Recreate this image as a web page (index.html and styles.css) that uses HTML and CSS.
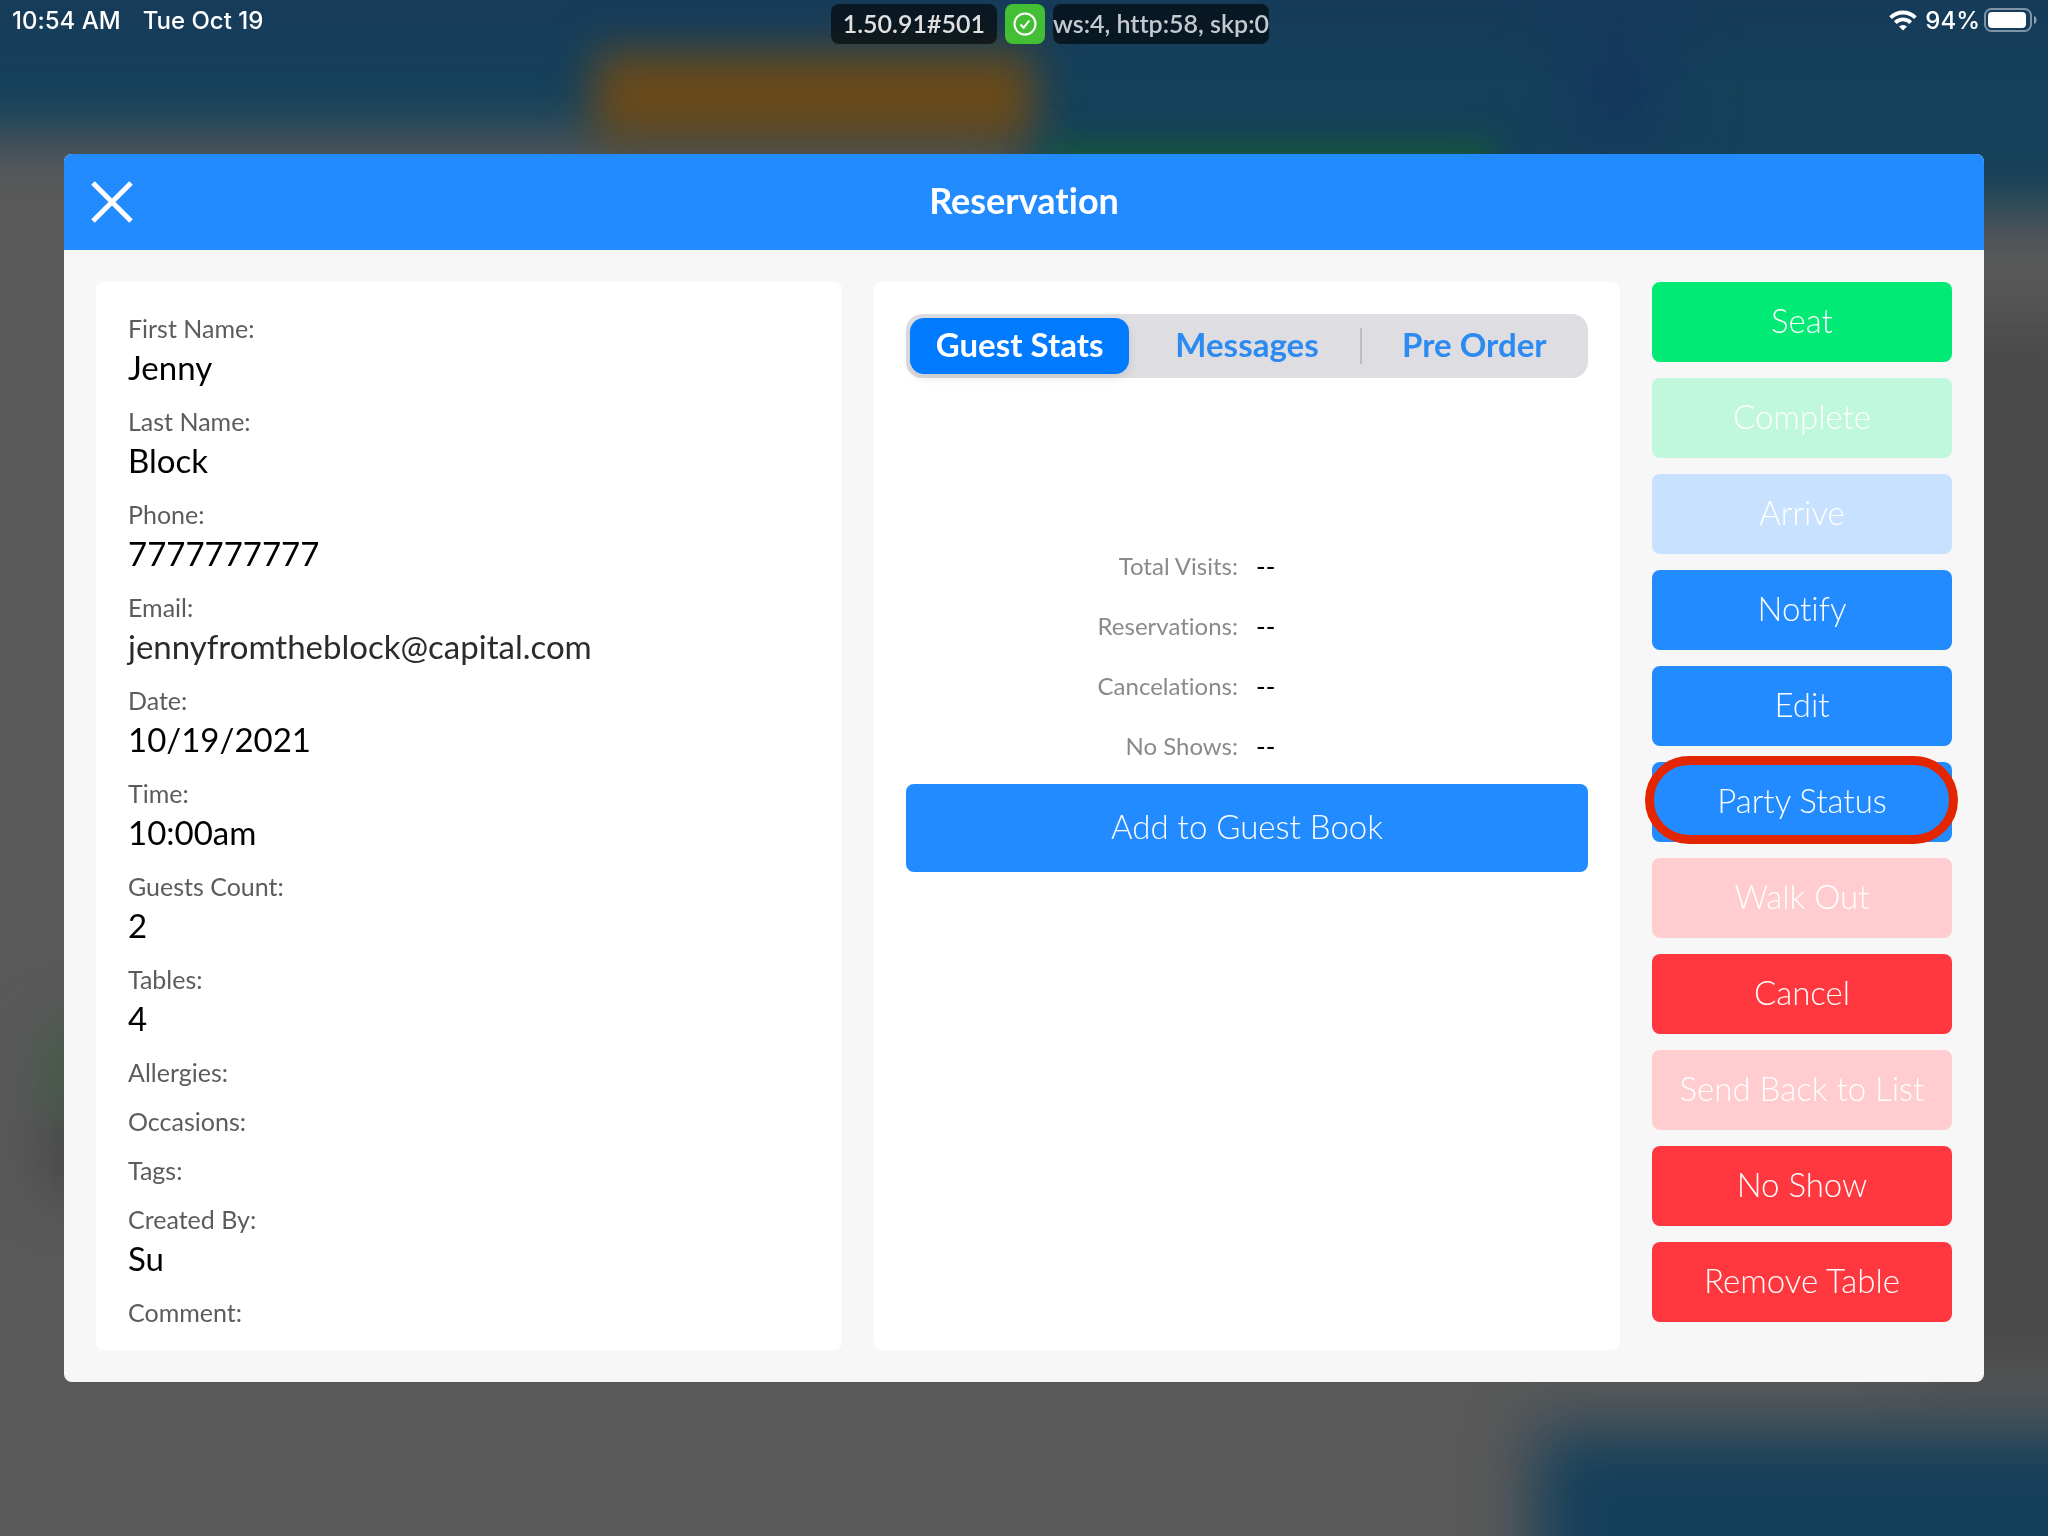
FILE: index.html
```
<!DOCTYPE html>
<html lang="en">
<head>
    <meta charset="UTF-8">
    <meta name="viewport" content="width=device-width, initial-scale=1.0">
    <title>Reservation</title>
    <link rel="stylesheet" href="styles.css">
</head>
<body>
    <div class="backdrop" aria-hidden="true">
        <div class="blob blob-side"></div>
        <div class="blob blob-bar"></div>
        <div class="blob blob-bar-right"></div>
        <div class="blob blob-navy"></div>
        <div class="blob blob-orange"></div>
        <div class="blob blob-green"></div>
        <div class="blob blob-left"></div>
        <div class="blob blob-left-green"></div>
        <div class="blob blob-bottom"></div>
    </div>

    <header class="status-bar">
        <div class="status-side">
            <div class="clock">
                <span>10:54 AM</span>
                <span>Tue Oct 19</span>
            </div>
            <span class="pill">1.50.91#501</span>
        </div>
        <span class="pill pill-ok">
            <svg width="24" height="24" viewBox="0 0 24 24" fill="none" stroke="#fff" stroke-width="2">
                <circle cx="12" cy="12" r="10.5"/>
                <path d="M7.5 12.5l3.2 3.2 5.6-7.2"/>
            </svg>
        </span>
        <div class="status-side">
            <span class="pill pill-log">ws:4, http:58, skp:0</span>
            <div class="battery">
                <svg width="28" height="21" viewBox="0 0 28 21" fill="none" stroke="#fff" stroke-width="3.8">
                    <path d="M1.6 7.6a17.6 17.6 0 0 1 24.8 0"/>
                    <path d="M6.3 12.6a11 11 0 0 1 15.4 0"/>
                    <path d="M14 20.6l-4-4.1a5.8 5.8 0 0 1 8 0z" fill="#fff" stroke="none"/>
                </svg>
                <span class="percent">94%</span>
                <svg width="54" height="24" viewBox="0 0 54 24">
                    <rect x="1" y="1" width="46" height="22" rx="6.5" fill="none" stroke="#fff" stroke-opacity=".45" stroke-width="2"/>
                    <rect x="4" y="4" width="38" height="16" rx="4" fill="#fff"/>
                    <path d="M50 8c3.500 1 3.500 7 0 8z" fill="#fff" fill-opacity=".5"/>
                </svg>
            </div>
        </div>
    </header>

    <main class="modal">
        <div class="modal-header">
            <button class="close" aria-label="Close">
                <svg width="42" height="42" viewBox="0 0 42 42" stroke="#fff" stroke-width="5">
                    <path d="M2 2l38 38M40 2L2 40"/>
                </svg>
            </button>
            <h1>Reservation</h1>
        </div>

        <div class="modal-body">
            <section class="panel details">
                <dl>
                    <div><dt>First Name:</dt><dd>Jenny</dd></div>
                    <div><dt>Last Name:</dt><dd>Block</dd></div>
                    <div><dt>Phone:</dt><dd>7777777777</dd></div>
                    <div><dt>Email:</dt><dd class="email">jennyfromtheblock@capital.com</dd></div>
                    <div><dt>Date:</dt><dd>10/19/2021</dd></div>
                    <div><dt>Time:</dt><dd>10:00am</dd></div>
                    <div><dt>Guests Count:</dt><dd>2</dd></div>
                    <div><dt>Tables:</dt><dd>4</dd></div>
                    <div><dt>Allergies:</dt></div>
                    <div><dt>Occasions:</dt></div>
                    <div><dt>Tags:</dt></div>
                    <div><dt>Created By:</dt><dd>Su</dd></div>
                    <div><dt>Comment:</dt></div>
                </dl>
            </section>

            <section class="panel guest">
                <div class="tabs" role="tablist">
                    <button class="tab active" role="tab" aria-selected="true">Guest Stats</button>
                    <button class="tab" role="tab" aria-selected="false">Messages</button>
                    <button class="tab" role="tab" aria-selected="false">Pre Order</button>
                </div>
                <dl class="stats">
                    <dt>Total Visits:</dt><dd>--</dd>
                    <dt>Reservations:</dt><dd>--</dd>
                    <dt>Cancelations:</dt><dd>--</dd>
                    <dt>No Shows:</dt><dd>--</dd>
                </dl>
                <button class="btn btn-wide">Add to Guest Book</button>
            </section>

            <nav class="actions">
                <button class="btn green">Seat</button>
                <button class="btn green" disabled>Complete</button>
                <button class="btn" disabled>Arrive</button>
                <button class="btn">Notify</button>
                <button class="btn">Edit</button>
                <button class="btn highlighted">Party Status</button>
                <button class="btn red" disabled>Walk Out</button>
                <button class="btn red">Cancel</button>
                <button class="btn red" disabled>Send Back to List</button>
                <button class="btn red">No Show</button>
                <button class="btn red">Remove Table</button>
            </nav>
        </div>
    </main>
</body>
</html>
```
FILE: styles.css
```
* {
    margin: 0;
    padding: 0;
    box-sizing: border-box;
}

body {
    font-family: Lato, "Open Sans", sans-serif;
    font-size: 33px;
    font-variant-ligatures: none;
    min-height: 100vh;
    background-color: #595959;
    color: #000;
}

button {
    border: none;
    background: none;
    font: inherit;
    cursor: pointer;
}

svg {
    display: block;
}

/* blurred screen behind the dialog */
.backdrop {
    position: fixed;
    inset: 0;
    overflow: hidden;
    z-index: -1;
}

.blob {
    position: absolute;
    filter: blur(28px);
}

.blob-bar {
    top: -80px;
    left: -80px;
    right: -80px;
    height: 215px;
    background: linear-gradient(#173b5a 45%, #14415a 70%);
}

.blob-bar-right {
    top: 70px;
    left: 50%;
    right: -80px;
    height: 140px;
    background-color: #14415a;
}

.blob-navy {
    top: 30px;
    left: 77%;
    width: 80px;
    height: 110px;
    background-color: #15355f;
    filter: blur(36px);
}

.blob-orange {
    top: 52px;
    left: 29%;
    width: 440px;
    height: 90px;
    background-color: #6a4a1a;
    filter: blur(22px);
}

.blob-green {
    top: 142px;
    left: 51%;
    width: 450px;
    height: 80px;
    background-color: #17573c;
    filter: blur(16px);
}

.blob-side {
    top: 320px;
    right: -60px;
    width: 200px;
    height: 1050px;
    background-color: #494949;
}

.blob-left {
    top: 1110px;
    left: 50px;
    width: 100px;
    height: 80px;
    background-color: #444;
}

.blob-left-green {
    top: 1030px;
    left: 50px;
    width: 80px;
    height: 80px;
    background-color: #3f5a44;
}

.blob-bottom {
    top: 1430px;
    left: 75%;
    right: -80px;
    height: 200px;
    background-color: #143f5a;
    filter: blur(32px);
}

/* status bar */
.status-bar {
    display: grid;
    grid-template-columns: 1fr 40px 1fr;
    gap: 8px;
    padding: 4px 10px 0 12px;
    color: #fff;
}

.status-side {
    display: flex;
    justify-content: space-between;
}

.clock,
.battery {
    display: flex;
    align-items: center;
    height: 32px;
    font-family: Inter, sans-serif;
    font-size: 24px;
    font-weight: 500;
}

.clock {
    gap: 22px;
}

.percent {
    margin: 0 4px 0 8px;
}

.pill {
    height: 40px;
    padding: 0 12px;
    border-radius: 8px;
    background-color: rgba(0, 0, 0, 0.6);
    color: #e0e0e0;
    font-size: 25px;
    font-weight: 600;
    line-height: 38px;
}

.pill-ok {
    display: flex;
    align-items: center;
    justify-content: center;
    padding: 0;
    background-color: #43bf35;
}

.pill-log {
    padding: 0;
    color: #c3c9cd;
}

/* dialog */
.modal {
    margin: 110px 64px 0;
    border-radius: 8px;
    background-color: #f7f7f7;
    overflow: hidden;
}

.modal-header {
    display: grid;
    grid-template-columns: 48px 1fr 48px;
    align-items: center;
    height: 96px;
    padding: 0 24px;
    background-color: #228bff;
    color: #fff;
}

.close {
    display: flex;
    align-items: center;
    justify-content: center;
    height: 48px;
}

h1 {
    padding-bottom: 4px;
    font-size: 36px;
    font-weight: 700;
    text-align: center;
}

.modal-body {
    display: grid;
    grid-template-columns: 1fr 1fr 300px;
    gap: 32px;
    padding: 32px;
}

.panel {
    padding: 32px;
    border-radius: 8px;
    background-color: #fff;
}

.details {
    padding-top: 30px;
    padding-bottom: 21px;
}

.details dl {
    display: flex;
    flex-direction: column;
    gap: 16px;
}

.details dt {
    color: #5c5c5c;
    font-size: 25px;
    line-height: 33px;
}

.details dd {
    line-height: 44px;
}

.details .email {
    color: #2b2b2b;
}

/* segmented control */
.tabs {
    display: grid;
    grid-template-columns: repeat(3, 1fr);
    height: 64px;
    border-radius: 16px;
    background-color: #dddde2;
}

.tab {
    position: relative;
    margin: 4px;
    padding-bottom: 4px;
    border-radius: 14px;
    color: #2c8af0;
    font-weight: 700;
}

.tab.active {
    background-color: #007aff;
    color: #fff;
    box-shadow: 0 4px 10px rgba(0, 0, 0, 0.1);
}

.tab:last-child::before {
    content: "";
    position: absolute;
    top: 10px;
    left: -5px;
    width: 2px;
    height: 36px;
    background-color: #bcbcc2;
}

.stats {
    display: grid;
    grid-template-columns: 1fr 1fr;
    column-gap: 18px;
    margin: 158px 0 8px;
    line-height: 60px;
}

.stats dt {
    color: #8a8a8a;
    font-size: 24px;
    text-align: right;
}

.stats dd {
    font-size: 26px;
}

/* buttons */
.actions {
    display: flex;
    flex-direction: column;
    gap: 16px;
}

.btn {
    position: relative;
    height: 80px;
    padding-bottom: 4px;
    border-radius: 8px;
    background-color: #228bff;
    color: #fff;
    font-weight: 300;
}

.btn-wide {
    width: 100%;
    height: 88px;
}

.btn.green {
    background-color: #00ea75;
}

.btn.red {
    background-color: #ff383f;
}

.btn:disabled {
    background-color: #c8e1ff;
    cursor: default;
}

.btn.green:disabled {
    background-color: #bff8dc;
}

.btn.red:disabled {
    background-color: #ffcccf;
}

.highlighted::after {
    content: "";
    position: absolute;
    inset: -6px -6px -2px -7px;
    border: 9px solid #e42600;
    border-radius: 44px;
}
```
